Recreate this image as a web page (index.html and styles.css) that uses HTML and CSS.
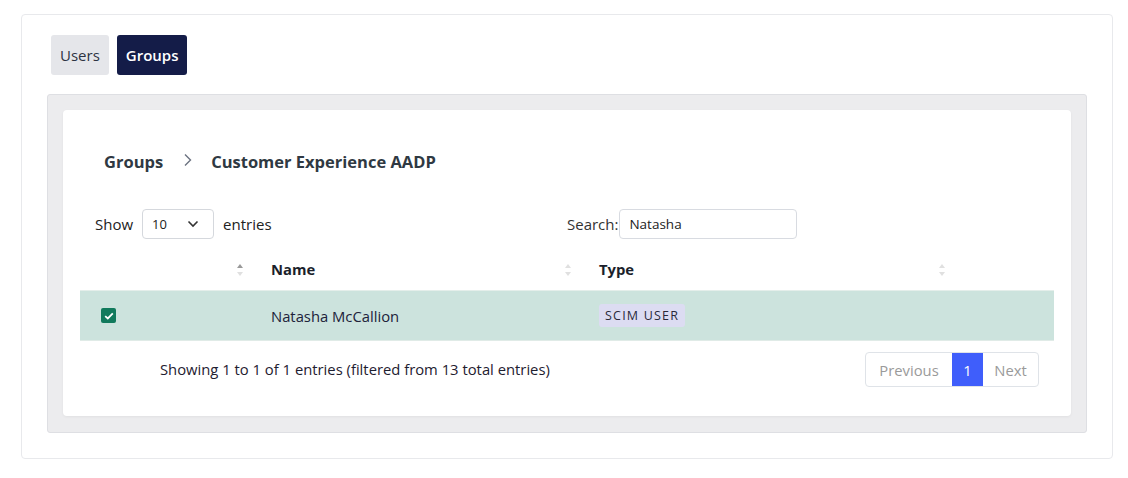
FILE: index.html
```html
<!DOCTYPE html>
<html>
<head>
<meta charset="utf-8">
<link rel="stylesheet" href="styles.css">
</head>
<body>
<div class="card">
  <div class="tabs">
    <button class="tab">Users</button>
    <button class="tab tab-active">Groups</button>
  </div>
  <div class="panel">
    <div class="inner">
      <div class="crumbs">
        <span class="crumb">Groups</span>
        <svg class="chev" width="10" height="14" viewBox="0 0 10 14"><path d="M2 1.5 L7.5 7 L2 12.5" fill="none" stroke="#6b7280" stroke-width="1.4"/></svg>
        <span class="crumb">Customer Experience AADP</span>
      </div>
      <div class="controls">
        <div class="ctl-left">
          <span>Show</span>
          <div class="select"><span>10</span><svg width="12" height="8" viewBox="0 0 12 8"><path d="M1.5 1.5 L6 6 L10.5 1.5" fill="none" stroke="#333" stroke-width="1.6"/></svg></div>
          <span>entries</span>
        </div>
        <div class="ctl-right">
          <span>Search:</span>
          <div class="input">Natasha</div>
        </div>
      </div>
      <div class="table">
        <div class="thead">
          <div class="c c1"><span class="sort on"></span></div>
          <div class="c c2">Name<span class="sort"></span></div>
          <div class="c c3">Type<span class="sort"></span></div>
          <div class="c c4"></div>
        </div>
        <div class="trow">
          <div class="c c1"><span class="check"><svg width="10" height="8" viewBox="0 0 10 8"><path d="M1.2 4.2 L3.8 6.5 L8.8 1.4" fill="none" stroke="#fff" stroke-width="1.8"/></svg></span></div>
          <div class="c c2">Natasha McCallion</div>
          <div class="c c3"><span class="badge">SCIM USER</span></div>
          <div class="c c4"></div>
        </div>
      </div>
      <div class="footer">
        <div class="info">Showing 1 to 1 of 1 entries (filtered from 13 total entries)</div>
        <div class="pager">
          <span class="pg dis">Previous</span>
          <span class="pg cur">1</span>
          <span class="pg dis">Next</span>
        </div>
      </div>
    </div>
  </div>
</div>
</body>
</html>
```
FILE: styles.css
```css
* { box-sizing: border-box; }
body {
  margin: 0;
  padding: 14px 15px 0 21px;
  background: #fff;
  font-family: "Open Sans", "Noto Sans", sans-serif;
  color: #212529;
  font-size: 14px;
}
.card {
  width: 1092px;
  height: 445px;
  border: 1px solid #e8e9ec;
  border-radius: 4px;
  padding: 20px 25px 25px 25px;
}
.tabs {
  display: flex;
  gap: 8px;
  margin-left: 4px;
}
.tab {
  height: 40px;
  border: 0;
  border-radius: 3px;
  padding: 0 9px;
  font-family: inherit;
  font-size: 15px;
  font-weight: 500;
  color: #2d3342;
  background: #e5e6ea;
}
.tab-active {
  background: #141c48;
  color: #fff;
  font-weight: 600;
}
.panel {
  margin-top: 19px;
  width: 1040px;
  height: 339px;
  border: 1px solid #dedfe3;
  border-radius: 3px;
  background: #ececee;
  padding: 15px;
}
.inner {
  width: 1008px;
  height: 306px;
  background: #fff;
  border-radius: 4px;
  box-shadow: 0 1px 3px rgba(0,0,0,0.05);
  padding: 39px 17px 0 17px;
}
.crumbs {
  display: flex;
  align-items: center;
  height: 24px;
  padding-left: 24px;
}
.crumb {
  font-size: 16.5px;
  font-weight: 700;
  color: #2f3942;
}
.chev { margin: 0 18px 2px 20px; }
.controls {
  display: flex;
  margin-top: 36px;
  height: 30px;
  align-items: center;
  font-size: 15px;
}
.ctl-left {
  width: 487px;
  padding-left: 15px;
  display: flex;
  align-items: center;
  gap: 9px;
  color: #222;
}
.select {
  width: 72px;
  height: 30px;
  border: 1px solid #d5d8dd;
  border-radius: 4px;
  display: flex;
  align-items: center;
  justify-content: space-between;
  padding: 0 14px 0 9px;
  font-size: 13px;
}
.ctl-right {
  display: flex;
  align-items: center;
  color: #333;
}
.input {
  margin-left: 1px;
  width: 178px;
  height: 30px;
  border: 1px solid #d8dbe1;
  border-radius: 4px;
  padding: 0 9px;
  display: flex;
  align-items: center;
  font-size: 13.5px;
  color: #222;
}
.table { margin-top: 11px; }
.thead, .trow { display: flex; }
.thead { height: 41px; border-bottom: 1px solid #e4eeea; }
.trow { height: 50px; background: #cce3dd; border-bottom: 1px solid #e0ebe7; }
.c {
  position: relative;
  display: flex;
  align-items: center;
  padding-left: 16px;
}
.thead .c { font-weight: 700; color: #1b1f2b; font-size: 14.8px; padding-bottom: 2px; }
.c1 { width: 175px; padding-left: 21px; }
.c2 { width: 328px; }
.c3 { width: 374px; }
.c4 { flex: 1; }
.trow .c2 { color: #20223a; font-size: 14.8px; }
.sort {
  position: absolute;
  right: 13px;
  top: 14px;
  width: 5px;
  height: 12px;
}
.sort::before, .sort::after {
  content: "";
  position: absolute;
  left: 0;
  border-left: 3px solid transparent;
  border-right: 3px solid transparent;
}
.sort::before { top: 0; border-bottom: 4px solid #e0e0e0; }
.sort::after { bottom: 0; border-top: 4px solid #e0e0e0; }
.sort.on::before { border-bottom-color: #999; }
.check {
  width: 15px;
  height: 15px;
  border-radius: 2px;
  background: #117a5c;
  display: flex;
  align-items: center;
  justify-content: center;
}
.badge {
  background: #dcdcf2;
  border-radius: 3px;
  padding: 3px 6px;
  font-size: 12.5px;
  letter-spacing: 1.2px;
  color: #2a2a3a;
  font-weight: 500;
}
.footer {
  display: flex;
  justify-content: space-between;
  align-items: center;
  margin-top: 11px;
  padding-right: 15px;
}
.info { padding-left: 80px; color: #1e2030; font-size: 14.8px; padding-bottom: 2px; }
.pager {
  display: flex;
  height: 35px;
  border: 1px solid #dfe3e8;
  border-radius: 4px;
}
.pg {
  display: flex;
  align-items: center;
  padding: 0 12px;
  font-size: 14.8px;
}
.dis { color: #9a9a9a; }
.pg:first-child { width: 86px; justify-content: center; }
.pg:last-child { width: 55px; justify-content: center; }
.cur { background: #3f5efb; color: #fff; width: 31px; justify-content: center; padding: 0; }
```
